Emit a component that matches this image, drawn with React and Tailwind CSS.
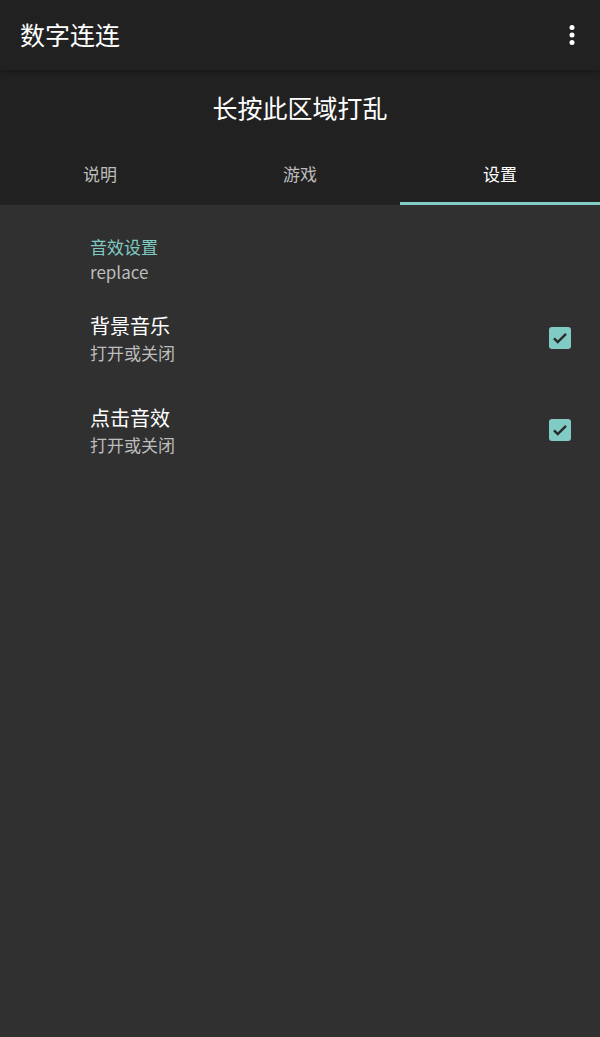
import React from "react";

const font = { fontFamily: '"Noto Sans CJK SC", Roboto, sans-serif' };

const Check = () => (
  <div className="w-[22px] h-[22px] rounded-[3px] bg-[#80cbc4] flex items-center justify-center -mt-[2px]">
    <svg width="18" height="18" viewBox="0 0 24 24" fill="none">
      <path d="M4 12.5l5 5L20 6.5" stroke="#2a2a2a" strokeWidth="3.2" />
    </svg>
  </div>
);

const Row = ({ title, summary }) => (
  <div className="flex items-center pl-[90px] pr-[29px] h-[92px]">
    <div className="flex-1">
      <div className="text-[20px] leading-[27px] text-white">{title}</div>
      <div className="text-[17px] leading-[27px] text-[#bdbdbd]">{summary}</div>
    </div>
    <Check />
  </div>
);

export default function App() {
  return (
    <div className="w-[600px] h-[1037px] bg-[#303030] flex flex-col" style={font}>
      <div className="bg-[#212121]">
        <div className="h-[70px] flex items-center justify-between pl-5 pr-6 shadow-[0_2px_4px_rgba(0,0,0,0.3)]">
          <span className="text-[25px] text-white">数字连连</span>
          <svg width="8" height="24" viewBox="0 0 8 24">
            <circle cx="4" cy="4.5" r="2.5" fill="#fff" />
            <circle cx="4" cy="12" r="2.5" fill="#fff" />
            <circle cx="4" cy="19.5" r="2.5" fill="#fff" />
          </svg>
        </div>
        <div className="h-[75px] flex items-center justify-center text-[25px] text-white">
          长按此区域打乱
        </div>
        <div className="flex h-[60px]">
          {["说明", "游戏", "设置"].map((t, i) => (
            <div
              key={t}
              className={`flex-1 flex items-center justify-center text-[17px] border-b-[3px] ${
                i === 2 ? "border-[#80cbc4] text-white" : "border-transparent text-[#bdbdbd]"
              }`}
            >
              {t}
            </div>
          ))}
        </div>
      </div>
      <div className="pt-[29px]">
        <div className="pl-[90px]">
          <div className="text-[17px] leading-[25px] text-[#80cbc4]">音效设置</div>
          <div className="text-[17px] leading-[25px] text-[#bdbdbd]">replace</div>
        </div>
        <div className="mt-[9px]">
          <Row title="背景音乐" summary="打开或关闭" />
          <Row title="点击音效" summary="打开或关闭" />
        </div>
      </div>
    </div>
  );
}
